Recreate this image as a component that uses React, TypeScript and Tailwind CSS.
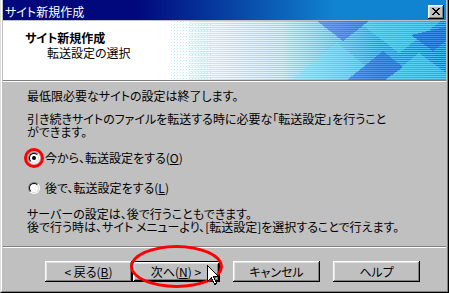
import type { ReactNode } from 'react';

const FONT = "font-['Noto_Sans_CJK_JP','Noto_Sans_CJK_SC',sans-serif] [font-feature-settings:'palt']";

const RAISED =
  'shadow-[inset_-1px_-1px_#000,inset_1px_1px_#fff,inset_-2px_-2px_#808080,inset_2px_2px_#dfdfdf]';
const RAISED_DEFAULT =
  'shadow-[inset_1px_1px_#000,inset_-1px_-1px_#000,inset_2px_2px_#fff,inset_-2px_-2px_#000,inset_3px_3px_#dfdfdf,inset_-3px_-3px_#808080]';

const CLOSE_PIXELS = ['11000011', '01100110', '00111100', '00011000', '00111100', '01100110', '11000011'];

function CloseGlyph() {
  return (
    <svg width="8" height="7" viewBox="0 0 8 7" shapeRendering="crispEdges">
      {CLOSE_PIXELS.flatMap((row, y) =>
        row.split('').map((p, x) => (p === '1' ? <rect key={`${x}-${y}`} x={x} y={y} width="1" height="1" fill="#000" /> : null)),
      )}
    </svg>
  );
}

function HeaderArt() {
  const rows = Array.from({ length: 59 }, (_, i) => i);
  return (
    <svg width="275" height="59" viewBox="0 0 275 59" shapeRendering="crispEdges" className="block">
      <defs>
        <linearGradient id="ga" x1="0" x2="1" y1="0" y2="0">
          <stop offset="0" stopColor="#ffffff" />
          <stop offset="0.12" stopColor="#c4ecfc" />
          <stop offset="0.4" stopColor="#9ad6f6" />
          <stop offset="0.55" stopColor="#78b8f4" />
          <stop offset="0.75" stopColor="#4a80f2" />
          <stop offset="1" stopColor="#3a5ef0" />
        </linearGradient>
        <linearGradient id="gb" x1="0" x2="1" y1="0" y2="0">
          <stop offset="0" stopColor="#ffffff" />
          <stop offset="0.12" stopColor="#f2fbff" />
          <stop offset="0.4" stopColor="#d6f1fc" />
          <stop offset="0.55" stopColor="#a4e2f8" />
          <stop offset="0.75" stopColor="#5ccbf4" />
          <stop offset="1" stopColor="#44bcf2" />
        </linearGradient>
        <pattern id="dots" width="3" height="3" patternUnits="userSpaceOnUse">
          <rect x="0" y="0" width="1" height="1" fill="#9fe2fb" />
          <rect x="2" y="1" width="1" height="1" fill="#d6f4ff" />
        </pattern>
      </defs>
      {rows.map((i) => (
        <rect key={i} x="0" y={i} width="275" height="1" fill={i % 2 ? 'url(#gb)' : 'url(#ga)'} />
      ))}
      <rect x="0" y="0" width="18" height="59" fill="#fff" />
      <rect x="0" y="0" width="40" height="59" fill="url(#dots)" opacity="0.7" />
      <g opacity="0.4">
        <polygon points="120,59 166,22 212,59" fill="#70e4ff" />
        <polygon points="186,0 228,32 270,0" fill="#70e4ff" />
        <polygon points="214,59 248,32 275,52 275,59" fill="#70e4ff" />
        <polygon points="146,0 172,20 198,0" fill="#2c40e0" />
        <polygon points="176,59 212,30 232,46 214,59" fill="#2c40e0" />
        <polygon points="240,14 262,30 275,20 275,6" fill="#2c40e0" />
      </g>
    </svg>
  );
}

function Radio({ checked, ring }: { checked?: boolean; ring?: boolean }) {
  return (
    <div className="relative h-[12px] w-[12px] shrink-0">
      <div className="h-[12px] w-[12px] rounded-full border border-t-[#808080] border-l-[#808080] border-b-white border-r-white">
        <div className="flex h-full w-full items-center justify-center rounded-full border border-t-black border-l-black border-b-[#dfdfdf] border-r-[#dfdfdf] bg-white">
          {checked && <div className="h-[4px] w-[4px] rounded-full bg-black" />}
        </div>
      </div>
      {ring && <div className="absolute left-[-4px] top-[-4px] h-[20px] w-[20px] rounded-full border-[3px] border-[#f00]" />}
    </div>
  );
}

function Button({ children, primary }: { children: ReactNode; primary?: boolean }) {
  return (
    <button
      className={`flex h-[21px] ${primary ? 'w-[88px]' : 'w-[87px]'} items-center justify-center bg-[#c0c0c0] text-[12px] leading-none text-black ${
        primary ? RAISED_DEFAULT : RAISED
      }`}
    >
      {children}
    </button>
  );
}

function Line({ children }: { children: ReactNode }) {
  return <div className="h-[13px] overflow-visible whitespace-nowrap leading-[13px]">{children}</div>;
}

export default function App() {
  return (
    <div className={`relative h-[293px] w-[449px] overflow-hidden bg-[#c0c0c0] ${FONT} text-black`}>
      <div className="h-full border-l border-r border-b border-l-[#dfdfdf] border-r-black border-b-black">
        <div className="h-full border-l border-r border-b border-l-white border-r-[#808080] border-b-[#808080] px-px pb-px">
          {/* title bar */}
          <div className="flex h-[20px] items-center justify-between bg-[linear-gradient(to_right,#00087b_0%,#00087b_30%,#1084d0_75%,#1084d0_100%)] pl-[2px] pr-[2px] pt-[3px]">
            <span className="text-[12px] leading-none text-white">サイト新規作成</span>
            <div className={`flex h-[14px] w-[16px] items-start justify-start bg-[#c0c0c0] pl-[4px] pt-[3px] ${RAISED}`}>
              <CloseGlyph />
            </div>
          </div>
          <div className="h-px" />

          {/* header */}
          <div className="flex h-[59px] bg-white">
            <div className="flex-1 pl-[22px] pt-[10px] text-[12px]">
              <Line>
                <span className="font-bold">サイト新規作成</span>
              </Line>
              <div className="mt-[2px] pl-[22px]">
                <Line>転送設定の選択</Line>
              </div>
            </div>
            <HeaderArt />
          </div>
          <div className="h-px bg-[#808080]" />
          <div className="h-px bg-white" />

          {/* body */}
          <div className="h-[164px] pl-[24px] pt-[7px] text-[12px]">
            <Line>最低限必要なサイトの設定は終了します。</Line>
            <div className="mt-[10px]">
              <Line>引き続きサイトのファイルを転送する時に必要な「転送設定」を行うこと</Line>
              <Line>ができます。</Line>
            </div>
            <div className="mt-[13px] flex h-[13px] items-center gap-[5px] pl-[1px]">
              <Radio checked ring />
              <span className="leading-[13px]">
                今から、転送設定をする(<u>O</u>)
              </span>
            </div>
            <div className="mt-[17px] flex h-[13px] items-center gap-[5px] pl-[1px]">
              <Radio />
              <span className="leading-[13px]">
                後で、転送設定をする(<u>L</u>)
              </span>
            </div>
            <div className="mt-[13px]">
              <Line>サーバーの設定は、後で行うこともできます。</Line>
              <Line>後で行う時は、サイト メニューより、[転送設定]を選択することで行えます。</Line>
            </div>
          </div>
          <div className="h-px bg-[#808080]" />
          <div className="h-px bg-white" />

          {/* buttons */}
          <div className="flex pl-[42px] pt-[13px]">
            <Button>
              &lt; 戻る(<u>B</u>)
            </Button>
            <Button primary>
              次へ(<u>N</u>) &gt;
            </Button>
            <div className="ml-[13px]">
              <Button>キャンセル</Button>
            </div>
            <div className="ml-[13px]">
              <Button>ヘルプ</Button>
            </div>
          </div>
        </div>
      </div>

      {/* annotation overlay */}
      <div className="absolute left-[130px] top-[245px] h-[43px] w-[93px] rounded-[50%] border-[3px] border-[#f00]" />
      <svg className="absolute left-[207px] top-[265px]" width="13" height="21" viewBox="0 0 13 21" shapeRendering="crispEdges">
        <path d="M0.5 0.5 L0.5 16.5 L4.5 12.5 L7.5 19.5 L9.5 18.5 L6.5 11.5 L11.5 11.5 Z" fill="#fff" stroke="#000" strokeWidth="1" />
      </svg>
    </div>
  );
}
